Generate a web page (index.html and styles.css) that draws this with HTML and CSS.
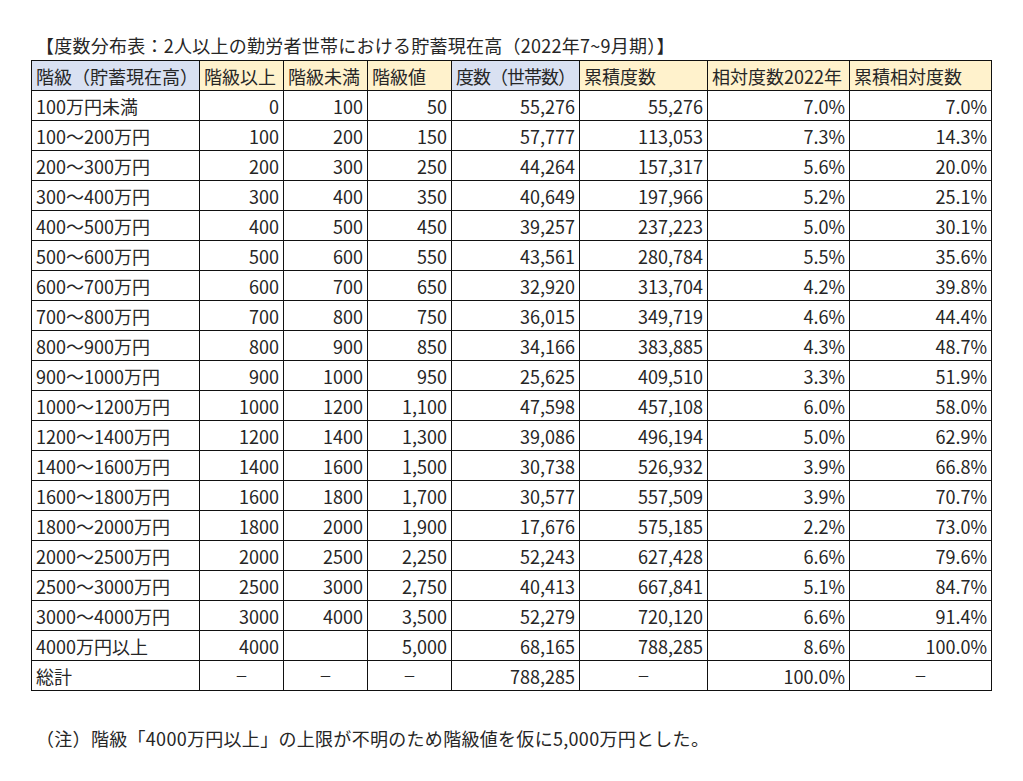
FILE: index.html
```html
<!DOCTYPE html>
<html lang="ja">
<head>
<meta charset="utf-8">
<title>度数分布表</title>
<link rel="stylesheet" href="styles.css">
</head>
<body>
<div class="sheet">
  <div class="title">【度数分布表：2人以上の勤労者世帯における貯蓄現在高（2022年7~9月期）】</div>
  <table class="freq">
    <colgroup>
      <col class="c-class"><col class="c-n"><col class="c-n"><col class="c-n">
      <col class="c-m"><col class="c-m"><col class="c-w"><col class="c-w">
    </colgroup>
    <thead>
      <tr>
        <th class="blue">階級（貯蓄現在高）</th>
        <th class="orange">階級以上</th>
        <th class="orange">階級未満</th>
        <th class="orange">階級値</th>
        <th class="blue tight">度数（世帯数）</th>
        <th class="orange">累積度数</th>
        <th class="orange">相対度数2022年</th>
        <th class="orange">累積相対度数</th>
      </tr>
    </thead>
    <tbody>
      <tr><td>100万円未満</td><td class="num">0</td><td class="num">100</td><td class="num">50</td><td class="num">55,276</td><td class="num">55,276</td><td class="num">7.0%</td><td class="num">7.0%</td></tr>
      <tr><td>100～200万円</td><td class="num">100</td><td class="num">200</td><td class="num">150</td><td class="num">57,777</td><td class="num">113,053</td><td class="num">7.3%</td><td class="num">14.3%</td></tr>
      <tr><td>200～300万円</td><td class="num">200</td><td class="num">300</td><td class="num">250</td><td class="num">44,264</td><td class="num">157,317</td><td class="num">5.6%</td><td class="num">20.0%</td></tr>
      <tr><td>300～400万円</td><td class="num">300</td><td class="num">400</td><td class="num">350</td><td class="num">40,649</td><td class="num">197,966</td><td class="num">5.2%</td><td class="num">25.1%</td></tr>
      <tr><td>400～500万円</td><td class="num">400</td><td class="num">500</td><td class="num">450</td><td class="num">39,257</td><td class="num">237,223</td><td class="num">5.0%</td><td class="num">30.1%</td></tr>
      <tr><td>500～600万円</td><td class="num">500</td><td class="num">600</td><td class="num">550</td><td class="num">43,561</td><td class="num">280,784</td><td class="num">5.5%</td><td class="num">35.6%</td></tr>
      <tr><td>600～700万円</td><td class="num">600</td><td class="num">700</td><td class="num">650</td><td class="num">32,920</td><td class="num">313,704</td><td class="num">4.2%</td><td class="num">39.8%</td></tr>
      <tr><td>700～800万円</td><td class="num">700</td><td class="num">800</td><td class="num">750</td><td class="num">36,015</td><td class="num">349,719</td><td class="num">4.6%</td><td class="num">44.4%</td></tr>
      <tr><td>800～900万円</td><td class="num">800</td><td class="num">900</td><td class="num">850</td><td class="num">34,166</td><td class="num">383,885</td><td class="num">4.3%</td><td class="num">48.7%</td></tr>
      <tr><td>900～1000万円</td><td class="num">900</td><td class="num">1000</td><td class="num">950</td><td class="num">25,625</td><td class="num">409,510</td><td class="num">3.3%</td><td class="num">51.9%</td></tr>
      <tr><td>1000～1200万円</td><td class="num">1000</td><td class="num">1200</td><td class="num">1,100</td><td class="num">47,598</td><td class="num">457,108</td><td class="num">6.0%</td><td class="num">58.0%</td></tr>
      <tr><td>1200～1400万円</td><td class="num">1200</td><td class="num">1400</td><td class="num">1,300</td><td class="num">39,086</td><td class="num">496,194</td><td class="num">5.0%</td><td class="num">62.9%</td></tr>
      <tr><td>1400～1600万円</td><td class="num">1400</td><td class="num">1600</td><td class="num">1,500</td><td class="num">30,738</td><td class="num">526,932</td><td class="num">3.9%</td><td class="num">66.8%</td></tr>
      <tr><td>1600～1800万円</td><td class="num">1600</td><td class="num">1800</td><td class="num">1,700</td><td class="num">30,577</td><td class="num">557,509</td><td class="num">3.9%</td><td class="num">70.7%</td></tr>
      <tr><td>1800～2000万円</td><td class="num">1800</td><td class="num">2000</td><td class="num">1,900</td><td class="num">17,676</td><td class="num">575,185</td><td class="num">2.2%</td><td class="num">73.0%</td></tr>
      <tr><td>2000～2500万円</td><td class="num">2000</td><td class="num">2500</td><td class="num">2,250</td><td class="num">52,243</td><td class="num">627,428</td><td class="num">6.6%</td><td class="num">79.6%</td></tr>
      <tr><td>2500～3000万円</td><td class="num">2500</td><td class="num">3000</td><td class="num">2,750</td><td class="num">40,413</td><td class="num">667,841</td><td class="num">5.1%</td><td class="num">84.7%</td></tr>
      <tr><td>3000～4000万円</td><td class="num">3000</td><td class="num">4000</td><td class="num">3,500</td><td class="num">52,279</td><td class="num">720,120</td><td class="num">6.6%</td><td class="num">91.4%</td></tr>
      <tr><td>4000万円以上</td><td class="num">4000</td><td class="num"></td><td class="num">5,000</td><td class="num">68,165</td><td class="num">788,285</td><td class="num">8.6%</td><td class="num">100.0%</td></tr>
      <tr><td>総計</td><td class="dash">－</td><td class="dash">－</td><td class="dash">－</td><td class="num">788,285</td><td class="dash">－</td><td class="num">100.0%</td><td class="dash">－</td></tr>
    </tbody>
  </table>
  <p class="note">（注）階級「4000万円以上」の上限が不明のため階級値を仮に5,000万円とした。</p>
</div>
</body>
</html>
```

FILE: styles.css
```css
html, body {
  margin: 0;
  padding: 0;
  background: #ffffff;
}

body {
  font-family: "Noto Sans CJK JP", "Noto Sans", sans-serif;
  font-size: 18px;
  color: #262626;
}

.sheet {
  padding: 33px 0 0 31px;
}

.title {
  height: 24px;
  line-height: 24px;
  margin: 0 0 3px 5px;
  letter-spacing: 0.25px;
  white-space: nowrap;
}

.freq {
  border-collapse: collapse;
  table-layout: fixed;
  width: 961px;
}

.c-class { width: 168px; }
.c-n { width: 84px; }
.c-m { width: 128px; }
.c-w { width: 142px; }

.freq th,
.freq td {
  border: 1px solid #111111;
  height: 29px;
  padding: 0 4px;
  line-height: 24px;
  font-weight: normal;
  text-align: left;
  white-space: nowrap;
  overflow: hidden;
}

.freq .tight {
  letter-spacing: -1px;
}

.freq .blue { background: #d9e1f2; }
.freq .orange { background: #fff2cc; }

.freq .num { text-align: right; }
.freq .dash {
  text-align: center;
  font-size: 13px;
}

.note {
  margin: 35px 0 0 5px;
  line-height: 24px;
  letter-spacing: 0.3px;
}
```
